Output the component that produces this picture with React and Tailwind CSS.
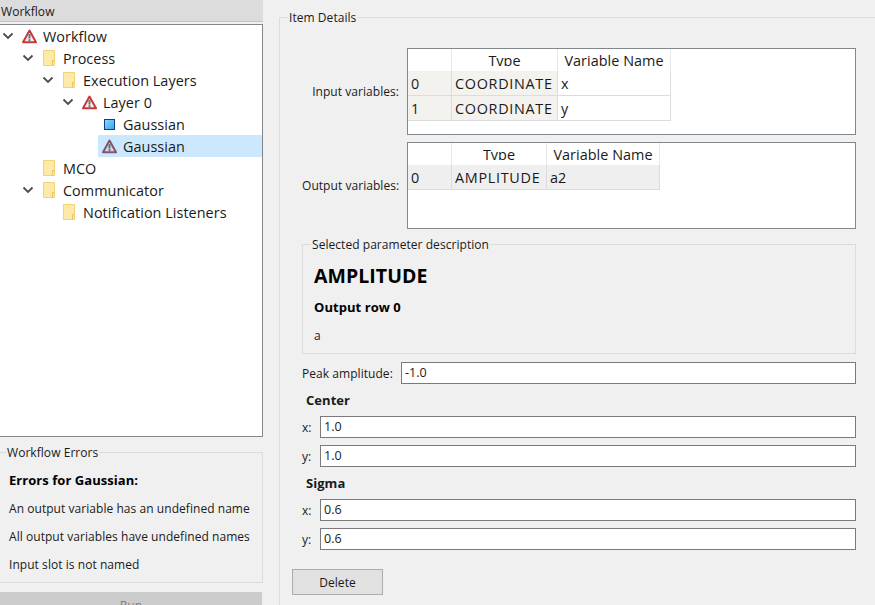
import React from "react";

function Chevron() {
  return (
    <svg width="12" height="12" viewBox="0 0 12 12" className="shrink-0">
      <path d="M1.5 3.5 L6 8 L10.5 3.5" fill="none" stroke="#4d4d4d" strokeWidth="1.8" />
    </svg>
  );
}

function Warn({ color = "#c9373c", fill = "#f7f2f2" }) {
  return (
    <svg width="15" height="15" viewBox="0 0 15 15" className="shrink-0">
      <path d="M7.5 1.6 L14 13.3 L1 13.3 Z" fill={fill} stroke={color} strokeWidth="2" strokeLinejoin="round" />
      <rect x="6.5" y="5" width="2" height="4.6" fill="#707070" />
      <rect x="6.5" y="10.2" width="2" height="1.9" fill="#707070" />
    </svg>
  );
}

function Folder() {
  return (
    <svg width="12" height="16" viewBox="0 0 12 16" className="ml-[1px] shrink-0">
      <path d="M0.5 0.5 H11.5 V15.5 H0.5 Z" fill="#fde9a8" stroke="#f0d376" />
      <path d="M9.5 15.5 V10.5 H11.5" fill="none" stroke="#e7c45c" />
    </svg>
  );
}

function Square() {
  return (
    <svg width="11" height="11" viewBox="0 0 11 11" className="ml-[2px] shrink-0">
      <defs>
        <linearGradient id="sq" x1="0" y1="0" x2="1" y2="1">
          <stop offset="0" stopColor="#8fdcfb" />
          <stop offset="1" stopColor="#2ea3ee" />
        </linearGradient>
      </defs>
      <rect x="0.5" y="0.5" width="10" height="10" fill="url(#sq)" stroke="#123c8a" />
    </svg>
  );
}

function Row({ depth, open, icon, label, selected }) {
  return (
    <div className="flex h-[22px] items-center" style={{ paddingLeft: depth * 20 + 2 }}>
      <div className="flex w-[16px] shrink-0 justify-start">{open ? <Chevron /> : null}</div>
      <div className={`flex h-[22px] flex-1 items-center ${selected ? "bg-[#cce8ff]" : ""}`}>
        <div className="flex w-[25px] shrink-0 justify-start pl-[4px]">{icon}</div>
        <span className="mt-[1px] whitespace-nowrap text-[14.4px] text-[#1a1a1a]">{label}</span>
      </div>
    </div>
  );
}

function Cell({ w, bg = "", children, className = "" }) {
  return (
    <div className={`flex h-full items-center overflow-hidden border-r border-[#dcdcdc] pl-[3px] pt-[1px] text-[14.4px] text-[#1a1a1a] ${bg} ${className}`} style={{ width: w }}>
      {children}
    </div>
  );
}

function Header({ w, children, clip }) {
  return (
    <div className="flex h-full justify-center overflow-hidden border-r border-[#e8e8e8] text-[14.4px] text-[#1a1a1a]" style={{ width: w }}>
      <span className={`mt-[2px] block leading-[19px] ${clip ? "h-[15px] overflow-hidden" : ""}`}>{children}</span>
    </div>
  );
}

function VarTable({ cols, rows, rowBg, nameBg }) {
  return (
    <div className="h-[87px] flex-1 border border-[#82878c] bg-white">
      <div className="flex h-[22px]">
        <Header w={cols[0]} />
        <Header w={cols[1]} clip>Type</Header>
        <Header w={cols[2]}>Variable Name</Header>
      </div>
      {rows.map((r) => (
        <div key={r[0]} className="flex h-[25px] w-fit border-b border-[#dcdcdc]">
          <Cell w={cols[0]} bg={rowBg}>{r[0]}</Cell>
          <Cell w={cols[1]} bg={rowBg} className="tracking-[0.7px]">{r[1]}</Cell>
          <Cell w={cols[2]} bg={nameBg}>{r[2]}</Cell>
        </div>
      ))}
    </div>
  );
}

function Field({ label, value, labelW }) {
  return (
    <div className="flex h-[22px] items-center">
      <div className="shrink-0 pt-[1px] text-[12px] text-[#1a1a1a]" style={{ width: labelW }}>{label}</div>
      <div className="flex h-[22px] flex-1 items-center border border-[#7a7a7a] bg-white pl-[3px] text-[12.5px] text-[#1a1a1a]">{value}</div>
    </div>
  );
}

function Legend({ children, className = "" }) {
  return (
    <span className={`absolute top-[-8px] bg-[#f0f0f0] px-[1px] text-[12px] leading-[16px] text-[#1a1a1a] ${className}`}>{children}</span>
  );
}

export default function App() {
  return (
    <div className="flex h-[605px] w-[875px] overflow-hidden bg-[#f0f0f0] font-['Open_Sans','Noto_Sans',sans-serif] tracking-[0.05px]">
      <div className="flex w-[263px] shrink-0 flex-col">
        <div className="h-[22px] shrink-0 border-b border-[#c4c4c4] bg-[#dcdcdc] pl-[1px] pt-[1px] text-[12px] leading-[21px] text-[#1a1a1a]">Workflow</div>
        <div className="mt-[2px] h-[413px] shrink-0 border border-l-0 border-[#82878c] bg-white">
          <Row depth={0} open icon={<Warn />} label="Workflow" />
          <Row depth={1} open icon={<Folder />} label="Process" />
          <Row depth={2} open icon={<Folder />} label="Execution Layers" />
          <Row depth={3} open icon={<Warn />} label="Layer 0" />
          <Row depth={4} icon={<Square />} label="Gaussian" />
          <Row depth={4} icon={<Warn color="#84536f" fill="#cfdcea" />} label="Gaussian" selected />
          <Row depth={1} icon={<Folder />} label="MCO" />
          <Row depth={1} open icon={<Folder />} label="Communicator" />
          <Row depth={2} icon={<Folder />} label="Notification Listeners" />
        </div>
        <div className="relative mt-[15px] h-[131px] shrink-0 border border-l-0 border-[#dcdcdc] pl-[9px] pt-[18px] text-[12px] text-[#1a1a1a]">
          <Legend className="left-[6px]">Workflow Errors</Legend>
          <div className="h-[28px] text-[13px] font-bold leading-[18px] text-black">Errors for Gaussian:</div>
          <div className="h-[28px] leading-[20px]">An output variable has an undefined name</div>
          <div className="h-[28px] leading-[20px]">All output variables have undefined names</div>
          <div className="h-[28px] leading-[20px]">Input slot is not named</div>
        </div>
        <div className="mr-[1px] mt-[9px] flex h-[20px] shrink-0 justify-center bg-[#cccccc] pt-[6px] text-[12px] leading-[16px] text-[#7d7d7d]">Run</div>
      </div>

      <div className="relative ml-[16px] mt-[17px] flex-1 border-l border-t border-[#dcdcdc] pl-[22px] pr-[19px] pt-[30px]">
        <Legend className="left-[8px]">Item Details</Legend>

        <div className="flex items-center">
          <div className="w-[105px] shrink-0 whitespace-nowrap text-right text-[12px] text-[#1a1a1a]"><span className="mr-[8px]">Input variables:</span></div>
          <VarTable
            cols={[44, 106, 113]}
            rowBg="bg-[#f3f2ee]"
            nameBg="bg-white"
            rows={[["0", "COORDINATE", "x"], ["1", "COORDINATE", "y"]]}
          />
        </div>

        <div className="mt-[7px] flex items-center">
          <div className="w-[105px] shrink-0 whitespace-nowrap text-right text-[12px] text-[#1a1a1a]"><span className="mr-[8px]">Output variables:</span></div>
          <VarTable
            cols={[44, 95, 113]}
            rowBg="bg-[#efefef]"
            nameBg="bg-[#efefef]"
            rows={[["0", "AMPLITUDE", "a2"]]}
          />
        </div>

        <div className="relative mt-[15px] h-[110px] border border-[#dcdcdc] pl-[11px] pt-[18px] text-[#1a1a1a]">
          <Legend className="left-[8px]">Selected parameter description</Legend>
          <div className="text-[19.5px] font-bold leading-[26px] text-black">AMPLITUDE</div>
          <div className="mt-[9px] text-[13px] font-bold leading-[18px] text-black">Output row 0</div>
          <div className="mt-[11px] text-[12px] leading-[18px]">a</div>
        </div>

        <div className="mt-[8px]"><Field label="Peak amplitude:" value="-1.0" labelW={99} /></div>
        <div className="ml-[4px] mt-[7px] text-[13px] font-bold leading-[18px] text-[#1a1a1a]">Center</div>
        <div className="mt-[7px]"><Field label="x:" value="1.0" labelW={18} /></div>
        <div className="mt-[7px]"><Field label="y:" value="1.0" labelW={18} /></div>
        <div className="ml-[4px] mt-[7px] text-[13px] font-bold leading-[18px] text-[#1a1a1a]">Sigma</div>
        <div className="mt-[7px]"><Field label="x:" value="0.6" labelW={18} /></div>
        <div className="mt-[7px]"><Field label="y:" value="0.6" labelW={18} /></div>
        <div className="-ml-[10px] mt-[19px] flex h-[26px] w-[91px] items-center justify-center border border-[#adadad] bg-[#e1e1e1] pt-[1px] text-[12px] text-[#1a1a1a]">Delete</div>
      </div>
    </div>
  );
}
